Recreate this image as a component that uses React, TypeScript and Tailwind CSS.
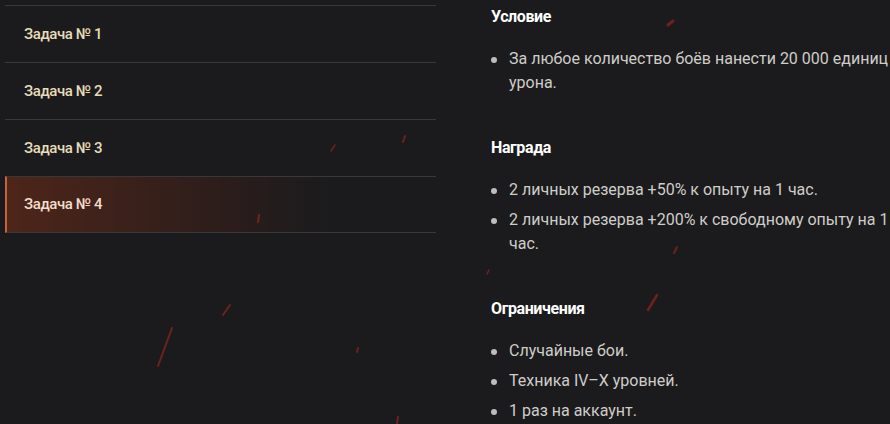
import React from "react";

const tasks = ["Задача № 1", "Задача № 2", "Задача № 3", "Задача № 4"];

const sections: { title: string; items: string[] }[] = [
  { title: "Условие", items: ["За любое количество боёв нанести 20 000 единиц урона."] },
  {
    title: "Награда",
    items: [
      "2 личных резерва +50% к опыту на 1 час.",
      "2 личных резерва +200% к свободному опыту на 1 час.",
    ],
  },
  { title: "Ограничения", items: ["Случайные бои.", "Техника IV–X уровней.", "1 раз на аккаунт."] },
];

const sparks: [number, number, number, number, number][] = [
  [668, 25, 673, 21, 3],
  [403, 142, 405, 136, 2],
  [331, 151, 335, 145, 1.5],
  [258, 222, 259, 215, 2],
  [223, 315, 230, 305, 2],
  [158, 366, 172, 328, 2],
  [357, 352, 358, 348, 2],
  [400, 343, 400, 337, 2],
  [397, 423, 398, 417, 2],
  [674, 253, 677, 247, 2],
  [487, 274, 489, 270, 1.5],
  [648, 310, 657, 295, 2.5],
];

export default function App() {
  return (
    <div
      className="relative w-[890px] h-[424px] overflow-hidden bg-[#1b1b1d] flex"
      style={{ fontFamily: "Roboto, 'Noto Sans', sans-serif" }}
    >
      <div className="w-[436px] shrink-0 pt-[5px] pl-[5px]">
        {tasks.map((t, i) => {
          const active = i === 3;
          return (
            <div
              key={t}
              className={
                "h-[57px] flex items-center border-t border-[#38383a] " +
                (i === 3 ? "border-b " : "") +
                (active
                  ? "border-l-2 border-l-[#c9603e] bg-gradient-to-r from-[#4e2519] via-[#2c1d1b] via-50% to-[#1b1b1d] to-75% pl-[17px] text-[#f2dccb]"
                  : "pl-[19px] text-[#e6dcb8]")
              }
            >
              <span className="text-[15px] font-medium tracking-[-0.4px] leading-none">{t}</span>
            </div>
          );
        })}
      </div>
      <div className="ml-[55px] pt-[5px] w-[400px] shrink-0 flex flex-col gap-[41px]">
        {sections.map((s) => (
          <div key={s.title}>
            <div className="text-[16px] leading-[24px] font-bold text-white tracking-[-0.4px] mb-[18px]">
              {s.title}
            </div>
            <ul className="flex flex-col gap-[6px]">
              {s.items.map((it) => (
                <li key={it} className="flex text-[16px] leading-[24px] text-[#cfcdc8]">
                  <span className="w-[18px] shrink-0 flex items-start pt-[10px]">
                    <span className="block w-[6px] h-[6px] rounded-full bg-[#bdbdbd]" />
                  </span>
                  <span className="w-[382px]">{it}</span>
                </li>
              ))}
            </ul>
          </div>
        ))}
      </div>
      <svg className="absolute inset-0 pointer-events-none" width="890" height="424">
        <defs>
          <filter id="soft" x="-50%" y="-50%" width="200%" height="200%">
            <feGaussianBlur stdDeviation="0.6" />
          </filter>
        </defs>
        {sparks.map(([x1, y1, x2, y2, w], i) => (
          <line
            key={i}
            x1={x1}
            y1={y1}
            x2={x2}
            y2={y2}
            stroke="#a3281c"
            strokeWidth={w}
            strokeLinecap="round"
            opacity={0.6}
            filter="url(#soft)"
          />
        ))}
      </svg>
    </div>
  );
}
